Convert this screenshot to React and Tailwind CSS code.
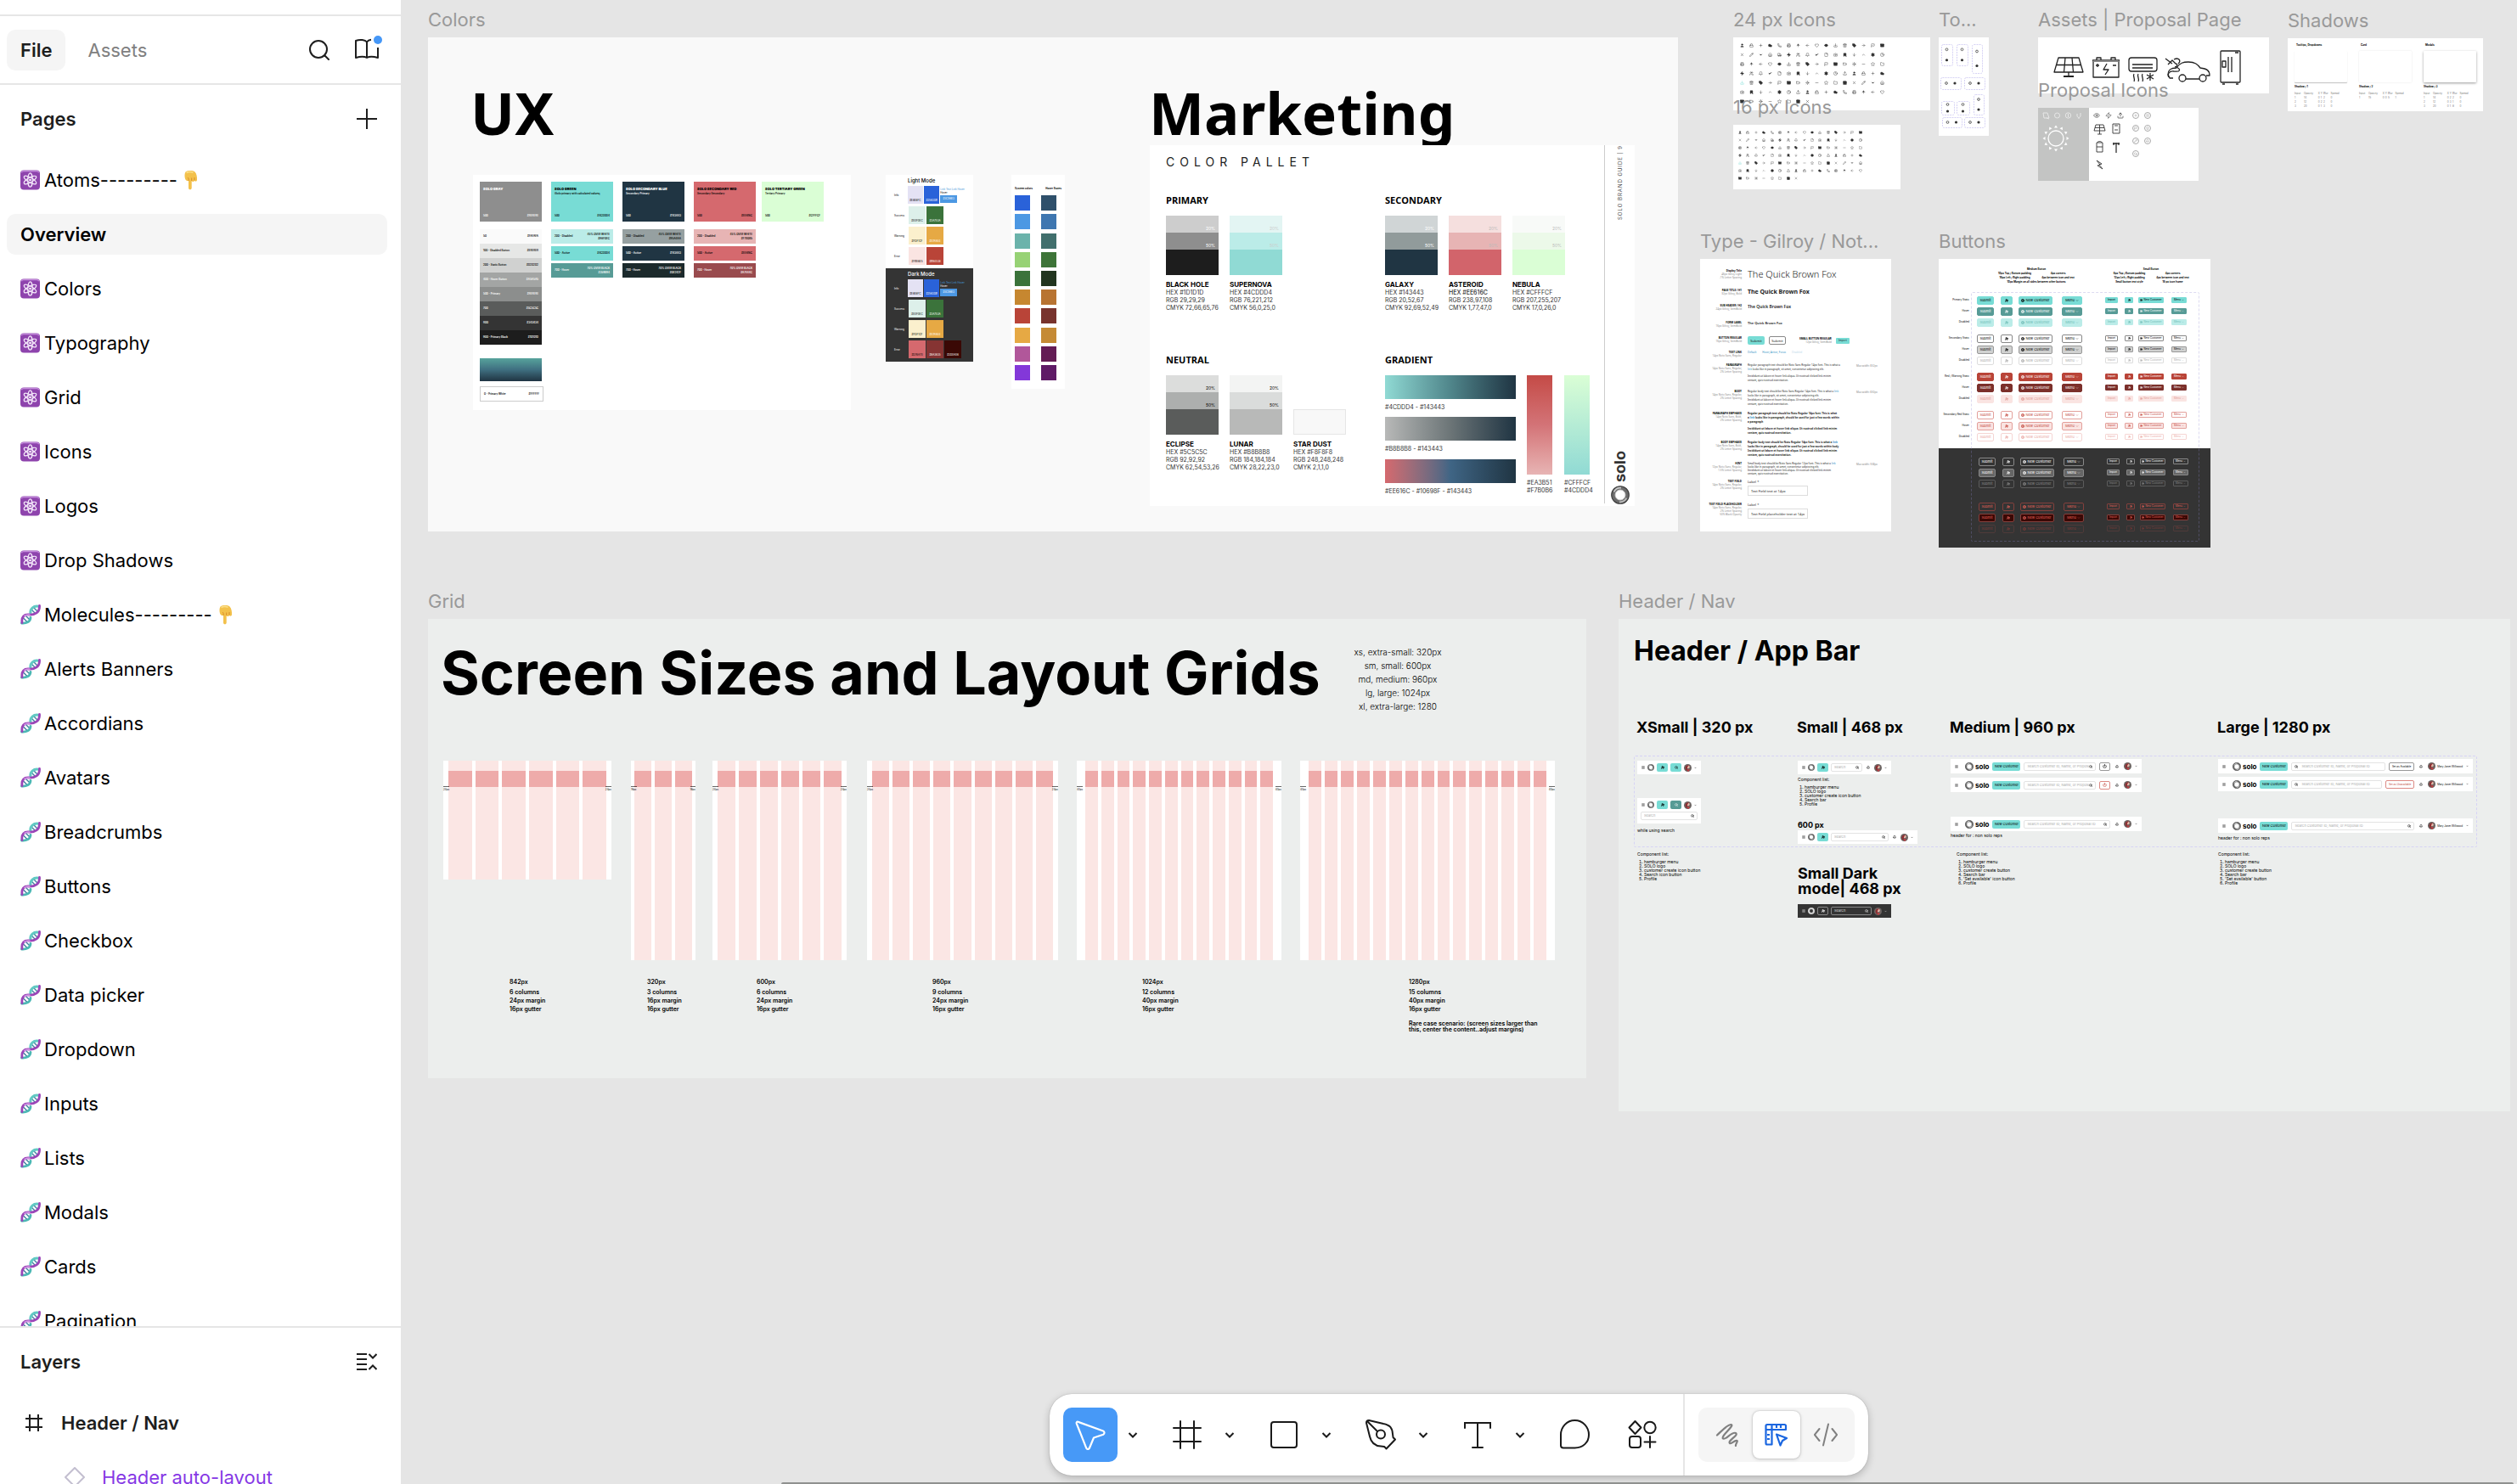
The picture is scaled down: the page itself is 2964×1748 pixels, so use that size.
import React from "react";
import {
  Search, Bell, User, Users, Settings, House, Heart, Star, Lock, Mail, Phone, Camera, Calendar, Check, X, Plus, Minus,
  ChevronDown, ChevronUp, ArrowUp, ArrowDown, ArrowLeft, ArrowRight, Trash2, Pencil, Flag, Cloud, Sun, Clock, Download,
  Upload, Eye, File, Folder, Tag, Truck, Zap, Battery, Printer, Bookmark, Menu, UserPlus, CirclePlus, Power,
} from "lucide-react";

/* ---------- shared drawings ---------- */

function AtomEmoji() {
  return (
    <svg viewBox="0 0 24 24" className="size-6 shrink-0" aria-hidden="true">
      <rect x="0" y="0.5" width="23" height="23" rx="4" fill="#8e44ad" />
      <path d="M1.500 3.200C1.500 2 2.500 1.600 3.700 1.600h15.600c1.200 0 2.200.4 2.200 1.600" stroke="#c48bdc" strokeWidth="1.400" fill="none" />
      <g fill="none" stroke="#f4e8fa" strokeWidth="1.200">
        <ellipse cx="11.500" cy="12" rx="2.800" ry="8.200" />
        <ellipse cx="11.500" cy="12" rx="2.800" ry="8.200" transform="rotate(60 11.500 12)" />
        <ellipse cx="11.500" cy="12" rx="2.800" ry="8.200" transform="rotate(120 11.500 12)" />
      </g>
      <circle cx="11.500" cy="12" r="1.300" fill="#fff" />
    </svg>
  );
}

function DnaEmoji() {
  return (
    <svg viewBox="0 0 24 24" className="size-6 shrink-0" fill="none" strokeLinecap="round" aria-hidden="true">
      <path d="M13.500 6.500l4 4M16 4l4 4M3.500 16l4.500 4.500M6.500 13.500l4.500 4.500" stroke="#3f7f9f" strokeWidth="1.400" />
      <path d="M1.500 22C7 22.500 11.500 20.500 12 15.500" stroke="#4bb8b4" strokeWidth="2.800" />
      <path d="M12 11C11 5 15.500 1.500 21 2.200" stroke="#62c9c3" strokeWidth="3" />
      <path d="M2 21.500C1 14.500 4.500 11.500 10 12c6 .5 13-2 12.500-10.500" stroke="#9b45b8" strokeWidth="2.800" />
      <path d="M5 13.500c2-1.500 4-1.500 6-1.300" stroke="#cf94e2" strokeWidth="1.600" />
    </svg>
  );
}

function HandEmoji() {
  return (
    <svg viewBox="0 0 24 24" className="size-6 shrink-0" aria-hidden="true">
      <path d="M5.500 2.500C8 .8 14 .5 16.500 2.500c2 2 2.800 6 2.500 9.500-.2 2-2.500 2.200-3 .5-.5 2-2.800 2-3.300.5v8.500c0 2.400-3.700 2.400-3.700 0V13c-2 .5-3.500-.8-4-2.500-.7-2.500-.8-6 .5-8z" fill="#f3c14b" />
      <path d="M12.700 13V9.500M16 12.500V9M9 13c.5-1.500.3-3-1-4" stroke="#d98e2b" strokeWidth="1" fill="none" />
      <path d="M6.500 3.500c2-1.300 6-1.300 8-.2" stroke="#fbe08a" strokeWidth="1.500" fill="none" />
    </svg>
  );
}

function SoloMark({ className, light }) {
  return (
    <svg viewBox="0 0 24 24" className={className} aria-hidden="true" fill="none">
      <circle cx="12" cy="12" r="9" stroke={light ? "#ddd" : "#6b6b6b"} strokeWidth="5" />
      <circle cx="12" cy="12" r="11.200" stroke={light ? "#eee" : "#3f3f3f"} strokeWidth="1.200" />
      <path d="M4 8a9 9 0 0 1 9-5" stroke="#c9c9c9" strokeWidth="2" />
      <path d="M20 16a9 9 0 0 1-9 5" stroke="#bdbdbd" strokeWidth="2" />
      <circle cx="12" cy="12" r="6.500" stroke="#d0d0d0" strokeWidth="1" />
    </svg>
  );
}

function Avatar() {
  return (
    <svg viewBox="0 0 20 20" className="size-[9px] shrink-0" aria-hidden="true">
      <circle cx="10" cy="10" r="10" fill="#6b6462" />
      <circle cx="11" cy="7.500" r="4" fill="#e6b8a8" />
      <path d="M4 8c0-5 8-7 11-4-3 0-5 1-6 5l-1 9C4 16 3 12 4 8z" fill="#8e2f33" />
      <path d="M9 14h6l-2 5H9z" fill="#c33b3f" />
    </svg>
  );
}

/* ---------- sidebar ---------- */

const pages = [
  ["atom", "Atoms---------", true],
  [null, "Overview"],
  ["atom", "Colors"],
  ["atom", "Typography"],
  ["atom", "Grid"],
  ["atom", "Icons"],
  ["atom", "Logos"],
  ["atom", "Drop Shadows"],
  ["dna", "Molecules---------", true],
  ["dna", "Alerts Banners"],
  ["dna", "Accordians"],
  ["dna", "Avatars"],
  ["dna", "Breadcrumbs"],
  ["dna", "Buttons"],
  ["dna", "Checkbox"],
  ["dna", "Data picker"],
  ["dna", "Dropdown"],
  ["dna", "Inputs"],
  ["dna", "Lists"],
  ["dna", "Modals"],
  ["dna", "Cards"],
  ["dna", "Pagination"],
];

function Sidebar() {
  return (
    <aside className="flex h-full w-[472px] shrink-0 flex-col bg-white text-[22px] leading-8 text-black">
      <div className="h-[17px] shrink-0" />
      <header className="flex h-[83px] shrink-0 items-center border-y-2 border-[#e6e6e6] pr-4 pl-2">
        <button className="h-12 rounded-[10px] bg-[#f5f5f5] px-4 font-semibold text-[#1e1e1e]">File</button>
        <button className="ml-2.5 h-12 px-4 text-[#808080]">Assets</button>
        <button aria-label="Search" className="ml-auto flex size-12 items-center justify-center">
          <svg viewBox="0 0 24 24" className="size-6" fill="none" stroke="#1e1e1e" strokeWidth="2" strokeLinecap="round">
            <circle cx="11" cy="11" r="10" />
            <path d="M18.500 18.500L23 23" />
          </svg>
        </button>
        <button aria-label="Libraries" className="ml-2 flex size-12 items-center justify-center">
          <svg viewBox="0 0 36 36" className="size-9" fill="none" stroke="#1e1e1e" strokeWidth="2" strokeLinejoin="round">
            <path d="M18 8.500v18.500M23 5.800C21 6 19 7 18 8.500 16 6 10 5 5 7v20c5-1.500 10.500-1.500 13 0 2.500-1.500 8-1.500 13 0V15" />
            <circle cx="31" cy="6" r="5" fill="#4597f7" stroke="none" />
          </svg>
        </button>
      </header>
      <div className="flex h-20 shrink-0 items-center justify-between pr-7 pl-6">
        <h2 className="font-semibold text-[#1e1e1e]">Pages</h2>
        <button aria-label="Add page">
          <svg viewBox="0 0 24 24" className="size-6" stroke="#1e1e1e" strokeWidth="2">
            <path d="M12 0v24M0 12h24" />
          </svg>
        </button>
      </div>
      <nav className="min-h-0 flex-1 overflow-hidden px-2">
        <ul>
          {pages.map(([kind, name, hand]) => (
            <li key={name} className="flex h-16 items-center">
              <a
                href={"#" + name}
                className={
                  kind
                    ? "flex h-12 w-full items-center gap-1 px-4"
                    : "flex h-12 w-[448px] items-center rounded-[10px] bg-[#f5f5f5] px-4 font-semibold"
                }
              >
                {kind === "atom" && <AtomEmoji />}
                {kind === "dna" && <DnaEmoji />}
                <span>{name}</span>
                {hand && <HandEmoji />}
              </a>
            </li>
          ))}
        </ul>
      </nav>
      <section className="h-[186px] shrink-0 overflow-hidden border-t-2 border-[#e6e6e6]">
        <div className="flex h-20 items-center justify-between pr-7 pl-6">
          <h2 className="font-semibold text-[#1e1e1e]">Layers</h2>
          <button aria-label="Collapse layers">
            <svg viewBox="0 0 24 24" className="size-6" fill="none" stroke="#1e1e1e" strokeWidth="2">
              <path d="M0 3h12M0 9h12M0 15h12M0 21h12M14.500 3l4.500 4.500L23.500 3M14.500 21l4.500-4.500 4.500 4.500" />
            </svg>
          </button>
        </div>
        <div className="flex h-16 items-center gap-5 pl-7 font-semibold text-[#1e1e1e]">
          <svg viewBox="0 0 24 24" className="size-6" fill="none" stroke="#1e1e1e" strokeWidth="2">
            <path d="M7 2v20M17 2v20M2 7h20M2 17h20" />
          </svg>
          Header / Nav
        </div>
        <div className="flex h-16 items-center gap-5 pl-[76px] text-[#8638e5]">
          <svg viewBox="0 0 24 24" className="size-6" fill="none" stroke="#c3bfd0" strokeWidth="2" strokeLinejoin="round">
            <path d="M12 1l11 11-11 11L1 12z" />
          </svg>
          Header auto-layout
        </div>
      </section>
    </aside>
  );
}

/* ---------- canvas frame ---------- */

function Frame({ title, place, body, children }) {
  return (
    <section className={"absolute " + place}>
      <h2 className="h-[42px] overflow-visible text-[22px] leading-[42px] whitespace-nowrap text-[#999]">{title}</h2>
      <div className={"relative overflow-hidden " + body}>{children}</div>
    </section>
  );
}

/* ---------- colors ---------- */

const heroes = [
  ["SOLO GRAY", "", "500", "#8E8E8E", "bg-[#8e8e8e] text-white"],
  ["SOLO GREEN", "(Solo primary with calculated values)", "500", "#4CDDD4", "bg-[#78dcd5]"],
  ["SOLO SECONDARY BLUE", "Secondary Primary", "500", "#143443", "bg-[#203543] text-white"],
  ["SOLO SECONDARY RED", "Secondary Secondary", "500", "#EE616C", "bg-[#d5696e]"],
  ["SOLO TERTIARY GREEN", "Tertiary Primary", "500", "#CFFFCF", "bg-[#dafed5]"],
];
const tints = [
  null,
  [["200 - Disabled", "#A6F0EC", "bg-[#bbece8]", "45% OVER WHITE"], ["500 - Active", "#4CDDD4", "bg-[#78dcd5]"], ["700 - Hover", "#359B94", "bg-[#579b96] text-white", "70% OVER BLACK"]],
  [["200 - Disabled", "#95A4AA", "bg-[#96a0a1]", "45% OVER WHITE"], ["500 - Active", "#143443", "bg-[#203543] text-white"], ["700 - Hover", "#0E242F", "bg-[#1c2a2c] text-white", "70% OVER BLACK"]],
  [["200 - Disabled", "#F7B0B5", "bg-[#e7b4b4]", "45% OVER WHITE"], ["500 - Active", "#EE616C", "bg-[#d5696e]"], ["700 - Hover", "#A7444C", "bg-[#994b4e] text-white", "70% OVER BLACK"]],
];
const grays = [
  ["50", "#FAFAFA", "bg-[#fafafa]"],
  ["100 - Disabled Button", "#E8E8E8", "bg-[#e6e7e6]"],
  ["200 - Static Button", "#D2D2D2", "bg-[#d0d1d0]"],
  ["400 - Hover Button", "#A5A5A5", "bg-[#a3a5a4] text-white"],
  ["500 - Primary", "#8E8E8E", "bg-[#8c8e8d] text-white"],
  ["700", "#5C5C5C", "bg-[#5a5c5b] text-white"],
  ["800", "#343434", "bg-[#343434] text-white"],
  ["900 - Primary Black", "#1D1D1D", "bg-[#1d1d1d] text-white"],
];

function UxPalette() {
  return (
    <div className="absolute top-[162px] left-[53px] h-[277px] w-[445px] bg-white p-2 text-[3px] leading-[5px] font-semibold">
      <div className="flex items-start gap-[11px]">
        {heroes.map(([name, sub, step, hex, color], i) => (
          <div key={name} className={i === 4 ? "-ml-1 w-[73px]" : "w-[73px]"}>
            <div className={"flex h-[47px] flex-col p-1 pt-1.5 " + color}>
              <b className="text-[4px] leading-[6px] whitespace-nowrap">{name}</b>
              <span>{sub}</span>
              <span className="mt-auto flex justify-between">
                <span>{step}</span>
                <span>{hex}</span>
              </span>
            </div>
            {i === 0 && (
              <div className="mt-[9px]">
                {grays.map(([label, code, tone]) => (
                  <div key={label} className={"flex h-[17px] items-center justify-between px-1 " + tone}>
                    <span>{label}</span>
                    <span>{code}</span>
                  </div>
                ))}
                <div className="mt-4 h-[27px] bg-linear-to-b from-[#57a39c] via-[#3f6f80] to-[#203543]" />
                <div className="mt-1.5 flex h-[18px] w-[75px] items-center justify-between border border-[#ccc] px-1">
                  <span>0 - Primary White</span>
                  <span>#FFFFFF</span>
                </div>
              </div>
            )}
            {tints[i] && (
              <div className="mt-[9px] flex flex-col gap-[3px]">
                {tints[i].map(([label, code, tone, over]) => (
                  <div key={label} className={"flex h-[17px] items-center justify-between px-1 " + tone}>
                    <span>{label}</span>
                    <span className="text-right">
                      {over && <span className="block">{over}</span>}
                      {code}
                    </span>
                  </div>
                ))}
              </div>
            )}
          </div>
        ))}
      </div>
    </div>
  );
}

const modeRows = [
  ["Info", [["#E8E8FC", "bg-[#e4e2f4] text-black"], ["#2563DB", "bg-[#2a62d9] text-white"]]],
  ["Success", [["#E0F0EC", "bg-[#ddf0ea] text-black"], ["#3A753A", "bg-[#3b733b] text-white"]]],
  ["Warning", [["#FDF1CF", "bg-[#fbf0cd] text-black"], ["#E7A944", "bg-[#e6a944] text-white"]]],
];
const lightRows = [...modeRows, ["Error", [["#FBE6E5", "bg-[#fae4e2] text-black"], ["#B94538", "bg-[#b94438] text-white"]]]];
const darkRows = [
  ...modeRows,
  ["Error", [["#D76A70", "bg-[#d5696e] text-black"], ["#8A3635", "bg-[#863433] text-white"], ["#3D0A06", "bg-[#3a0805] text-white"]]],
];

function ModePanel({ title, rows, tone }) {
  return (
    <div className={"h-[110px] px-2.5 pt-[3px] text-[3px] leading-[4px] " + tone}>
      <h4 className="pl-4 text-[6px] leading-[8px] font-medium">{title}</h4>
      <div className="mt-0.5 flex flex-col gap-[3px]">
        {rows.map(([label, cells], i) => (
          <div key={label} className="flex h-[21px] items-center gap-px">
            <span className="w-4">{label}</span>
            {cells.map(([code, color]) => (
              <span key={code} className={"flex h-[21px] w-5 items-end justify-center pb-0.5 " + color}>{code}</span>
            ))}
            {i === 0 && (
              <span className="flex flex-col whitespace-nowrap">
                <span className="text-[#4597d7]">Link Text Link Hover</span>
                <span className="leading-[5px]">Hover</span>
                <span className="flex h-[9px] w-5 items-center justify-center bg-[#4c98e3] text-white">#4C98E3</span>
              </span>
            )}
          </div>
        ))}
      </div>
    </div>
  );
}

const systemColors = [
  ["bg-[#2a62d9]", "bg-[#2f506b]"],
  ["bg-[#4c98e3]", "bg-[#3e76b0]"],
  ["bg-[#6bb3ab]", "bg-[#416f6d]"],
  ["bg-[#97d275]", "bg-[#3d7438]"],
  ["bg-[#3b733b]", "bg-[#22351f]"],
  ["bg-[#c68730]", "bg-[#b87432]"],
  ["bg-[#b94438]", "bg-[#78332d]"],
  ["bg-[#e6a944]", "bg-[#c58a35]"],
  ["bg-[#b1579a]", "bg-[#641c55]"],
  ["bg-[#8338d9]", "bg-[#5f1a66]"],
];

const primary = [
  ["BLACK HOLE", ["HEX #1D1D1D", "RGB 29,29,29", "CMYK 72,66,65,76"], ["bg-[#cdcdcd]", "bg-[#8e8e8e]", "bg-[#1d1d1d]"], "text-white"],
  ["SUPERNOVA", ["HEX #4CDDD4", "RGB 76,221,212", "CMYK 56,0,25,0"], ["bg-[#e3f5f3]", "bg-[#bbece8]", "bg-[#90dad4]"], "text-[#ccc]"],
];
const secondary = [
  ["GALAXY", ["HEX #143443", "RGB 20,52,67", "CMYK 92,69,52,49"], ["bg-[#d0d5d6]", "bg-[#919b9b]", "bg-[#203543]"], "text-white"],
  ["ASTEROID", ["HEX #EE616C", "RGB 238,97,108", "CMYK 1,77,47,0"], ["bg-[#f5dfde]", "bg-[#e7b4b4]", "bg-[#d2646b]"], "text-[#bbb]"],
  ["NEBULA", ["HEX #CFFFCF", "RGB 207,255,207", "CMYK 17,0,26,0"], ["bg-[#f8faf8]", "bg-[#ecf9e9]", "bg-[#dafed5]"], "text-[#bbb]"],
];
const neutral = [
  ["ECLIPSE", ["HEX #5C5C5C", "RGB 92,92,92", "CMYK 62,54,53,26"], ["bg-[#dcdddc]", "bg-[#adafae]", "bg-[#5a5c5b]"], "text-black"],
  ["LUNAR", ["HEX #B8B8B8", "RGB 184,184,184", "CMYK 28,22,23,0"], ["bg-[#f3f4f3]", "bg-[#dadcdb]", "bg-[#b8b9b8]"], "text-black"],
  ["STAR DUST", ["HEX #F8F8F8", "RGB 248,248,248", "CMYK 2,1,1,0"], ["", "", "bg-[#f8f8f8] border border-[#e6e6e6]"], null],
];

function BrandSwatches({ title, items }) {
  return (
    <div>
      <h4 className="font-['Open_Sans'] text-[11px] leading-3 font-bold">{title}</h4>
      <div className="mt-3 flex gap-[13px]">
        {items.map(([name, lines, tones, ink]) => (
          <div key={name} className="w-[62px] text-[7px] leading-[9px] whitespace-nowrap text-[#333]">
            <div className={"flex h-5 items-end justify-end px-1 text-[5px] " + tones[0] + " " + (ink || "")}>{ink && "20%"}</div>
            <div className={"flex h-5 items-end justify-end px-1 text-[5px] " + tones[1] + " " + (ink || "")}>{ink && "50%"}</div>
            <div className={"h-[30px] " + tones[2]} />
            <b className="mt-[7px] block text-[8px] text-black">{name}</b>
            {lines.map((l) => (
              <div key={l} className={l === "HEX #EE616C" ? "font-medium" : ""}>{l}</div>
            ))}
          </div>
        ))}
      </div>
    </div>
  );
}

function MarketingPalette() {
  return (
    <div className="absolute top-[127px] left-[850px] flex h-[425px] w-[571px] bg-white">
      <div className="h-[422px] w-[536px] border-r border-[#ccc] pl-[19px]">
        <h3 className="pt-2 text-[14px] leading-6 tracking-[6px] text-[#222]">COLOR PALLET</h3>
        <div className="mt-[27px] grid auto-rows-[188px] grid-cols-[258px_1fr]">
          <BrandSwatches title="PRIMARY" items={primary} />
          <BrandSwatches title="SECONDARY" items={secondary} />
          <BrandSwatches title="NEUTRAL" items={neutral} />
          <div>
            <h4 className="font-['Open_Sans'] text-[11px] leading-3 font-bold">GRADIENT</h4>
            <div className="mt-3 flex items-start text-[7px] leading-[9px] text-[#333]">
              <div className="w-[154px]">
                <div className="h-7 bg-linear-to-r from-[#90dad4] via-[#50868b] to-[#203543]" />
                <p className="mt-[5px] mb-[7px]">#4CDDD4 - #143443</p>
                <div className="h-7 bg-linear-to-r from-[#b8b9b8] via-[#6c7577] to-[#203543]" />
                <p className="mt-[5px] mb-[8px]">#B8B8B8 - #143443</p>
                <div className="h-7 bg-linear-to-r from-[#d5696e] via-[#3f6585] to-[#203543]" />
                <p className="mt-[5px]">#EE616C - #10698F - #143443</p>
              </div>
              <div className="ml-[13px] w-[30px]">
                <div className="mb-[5px] h-[117px] bg-linear-to-b from-[#c44a46] via-[#d37377] to-[#e7b4b4]" />
                <p>#EA3B51</p>
                <p>#F7B0B6</p>
              </div>
              <div className="ml-[14px] w-[30px]">
                <div className="mb-[5px] h-[117px] bg-linear-to-b from-[#dafed5] to-[#90dad4]" />
                <p>#CFFFCF</p>
                <p>#4CDDD4</p>
              </div>
            </div>
          </div>
        </div>
      </div>
      <div className="flex flex-1 flex-col items-center justify-between pb-0.5">
        <p className="rotate-180 text-[6px] leading-3 tracking-[1px] text-[#444] [writing-mode:vertical-rl]">SOLO BRAND GUIDE | 9</p>
        <div className="flex flex-col items-center gap-1">
          <b className="rotate-180 text-[18px] leading-5 text-[#333] [writing-mode:vertical-rl]">solo</b>
          <SoloMark className="size-[22px]" />
        </div>
      </div>
    </div>
  );
}

function ColorsFrame() {
  return (
    <Frame title="Colors" place="left-8 top-[2px]" body="h-[582px] w-[1472px] bg-[#f9f9f9]">
      <h3 className="absolute top-[42px] left-[50px] font-['Noto_Sans'] text-[69px] leading-[92px] font-bold">UX</h3>
      <h3 className="absolute top-[42px] left-[849px] font-['Noto_Sans'] text-[69px] leading-[92px] font-bold">Marketing</h3>
      <UxPalette />
      <div className="absolute top-[162px] left-[539px] w-[103px]">
        <ModePanel title="Light Mode" rows={lightRows} tone="bg-white" />
        <ModePanel title="Dark Mode" rows={darkRows} tone="bg-[#343434] text-white" />
      </div>
      <div className="absolute top-[162px] left-[687px] flex h-[252px] w-[63px] flex-col justify-between bg-white px-1 pt-3 pb-2.5 text-[3px] leading-[8px]">
        <div className="flex justify-between font-bold">
          <span>System colors</span>
          <span>Hover States</span>
        </div>
        {systemColors.map(([a, b]) => (
          <div key={a} className="flex gap-[13px]">
            <span className={"h-[18px] w-[18px] " + a} />
            <span className={"h-[18px] w-[18px] " + b} />
          </div>
        ))}
      </div>
      <MarketingPalette />
    </Frame>
  );
}

/* ---------- icon sheets ---------- */

const glyphs = [
  User, Users, Sun, ArrowUp, ArrowDown, Pencil, Tag, Lock, Bell, Minus, ArrowLeft, ChevronUp, ChevronDown, ArrowRight, Plus, Check,
  Star, Heart, Settings, House, Flag, Cloud, File, Folder, Eye, Clock, Truck, Mail, Phone, Camera, Calendar, Download, Upload, Zap,
  Battery, Printer, Bookmark, X, Trash2,
];

function IconSheet({ grid, size }) {
  const list = Array.from({ length: 104 }, (_, i) => glyphs[(i * 7 + (i >> 4) * 3) % glyphs.length]);
  return (
    <div className={"text-[#333] " + grid}>
      {list.map((G, i) => (
        <G key={i} className={size + (i === 64 ? " text-[#78dcd5]" : "")} strokeWidth={2} fill={i % 3 === 0 ? "currentColor" : "none"} />
      ))}
    </div>
  );
}

const togglesBoxes = [
  [3, 8, 13, 25], [21, 8, 13, 25], [39, 8, 12, 34], [2, 47, 24, 14], [30, 47, 24, 14],
  [3, 75, 15, 16], [21, 75, 15, 16], [41, 67, 12, 24], [4, 94, 23, 12], [30, 94, 24, 12],
];

function TogglesDrawing() {
  return (
    <svg viewBox="0 0 59 116" className="h-[116px] w-[59px]" fill="none" aria-hidden="true">
      {togglesBoxes.map(([x, y, w, h]) => {
        const tall = h > w - 1;
        const cx = x + w / 2;
        const cy = y + h / 2;
        return (
          <g key={x + "-" + y}>
            <rect x={x + 0.5} y={y + 0.5} width={w} height={h} rx="2" stroke="#d6d2f4" strokeDasharray="2 1" />
            <circle cx={tall ? cx : cx - 5} cy={tall ? cy - h / 4 : cy} r="1.400" stroke="#444" strokeWidth="0.800" />
            <circle cx={tall ? cx : cx + 5} cy={tall ? cy + h / 4 : cy} r="1.600" fill="#333" />
          </g>
        );
      })}
    </svg>
  );
}

function AssetsDrawing() {
  return (
    <svg viewBox="0 0 272 66" className="h-[66px] w-[272px]" fill="none" stroke="#222" strokeWidth="1.300" strokeLinejoin="round" aria-hidden="true">
      <path d="M24 24h24l5 17H19zM32 24l-1.500 17M40 24l1.500 17M22 32.500h28M36 41v5" />
      <path d="M30 46h12" strokeWidth="2" />
      <path d="M65 27h30v20H65zM64 27h32M69 27v-3h5v3M86 27v-3h5v3M68 33h4M70 31v4M88 33h4M81 31l-4 7h6l-4 6" />
      <path d="M65 28h30" strokeWidth="2" stroke="#888" />
      <rect x="107" y="24" width="33" height="16" rx="3" />
      <path d="M111 32h24M111 36h24M113 43c-2 3 2 6 0 9M118 43c-2 3 2 6 0 9M123 43c-2 3 2 6 0 9M132 42v9M128 44l8 5M136 44l-8 5" />
      <path d="M153 44c0-6 3-8 10-8 4-6 8-7 14-7 8 0 11 3 14 7 8 1 11 3 11 9h-4M190 49h-16M159 48h-4l-2-4" />
      <circle cx="170" cy="48" r="4" />
      <circle cx="194" cy="48" r="4" />
      <path d="M150 25l8 6M153 32l5-5 4 4c3 0 2 4-1 4M160 26c6-3 9 2 5 5M163 35c6 3 4 6-3 5-6-1-8 4-6 7" />
      <rect x="215" y="16" width="23" height="37" rx="1" />
      <path d="M224 23v18M228 23v18M217 28h4v7h-4zM232 18h4M217 55h3M233 55h3" />
    </svg>
  );
}

function ProposalDrawing() {
  return (
    <svg viewBox="0 0 60 87" className="h-[87px] w-[60px] bg-[#c3c4c3]" fill="none" stroke="#fff" aria-hidden="true">
      <circle cx="21" cy="36" r="9" strokeWidth="1.300" />
      {Array.from({ length: 12 }, (_, i) => (
        <path key={i} d="M19 23.500h4l-2-3z" fill="#fff" stroke="none" transform={"rotate(" + i * 30 + " 21 36)"} />
      ))}
      <g opacity="0.600">
        <path d="M6 6h5l2 6H7zM10 12l3 1" />
        <circle cx="22.500" cy="9" r="3" />
        <circle cx="35.500" cy="9" r="3.200" />
        <path d="M35.500 7v4M46 7v3c1 2 4 2 4-1V6M48 11v2" />
      </g>
    </svg>
  );
}

function ProposalIcons() {
  const ring = "absolute flex size-2 items-center justify-center rounded-full border border-[#aaa] text-[#777]";
  return (
    <>
      <ProposalDrawing />
      <Eye className="absolute top-[5px] left-[65px] size-2 text-[#555]" strokeWidth={2} />
      <Zap className="absolute top-[5px] left-[79px] size-2 text-[#555]" strokeWidth={2} />
      <Upload className="absolute top-[5px] left-[93px] size-2 text-[#333]" strokeWidth={2} />
      <svg viewBox="0 0 40 60" className="absolute top-[18px] left-[64px] h-[60px] w-10" fill="none" stroke="#333" strokeWidth="0.900" aria-hidden="true">
        <path d="M4 2h9l2 7H2zM8.500 2v11M3 5.500h11M6 13h5" />
        <path d="M24 1h8v11h-8zM26 3h4M26 8h4" />
        <path d="M5 23h7v11H5zM5 28h7M6 23c0-2 5-2 5 0" />
        <path d="M28 23v12M24 24h8M25 23v3M31 23v3" strokeWidth="1.300" />
        <path d="M5 44l6 4-3 1 4 5-6-4 3-1z" />
      </svg>
      <span className={ring + " top-[5px] left-[111px]"}><Plus className="size-1" /></span>
      <span className={ring + " top-[5px] left-[125px]"}><Menu className="size-1" /></span>
      <span className={ring + " top-[20px] left-[111px]"}><Flag className="size-1" /></span>
      <span className={ring + " top-[20px] left-[125px]"}><Star className="size-1" /></span>
      <span className={ring + " top-[35px] left-[111px]"}><Pencil className="size-1" /></span>
      <span className={ring + " top-[35px] left-[125px]"}><Bell className="size-1" /></span>
      <span className={ring + " top-[50px] left-[111px]"}><Cloud className="size-1" /></span>
    </>
  );
}

const shadowCards = [
  ["Tooltips, Dropdowns", "Shadow / 1", "shadow-[0_1px_1px_rgba(0,0,0,0.25)]", [[1, 14, 0, 1, 2, 0], [2, 12, 0, 2, 2, 0], [3, 20, 0, 1, 3, 0]]],
  ["Card", "Shadow / 2", "shadow-[0_0_2px_rgba(0,0,0,0.12)]", [[1, 15, 0, 0, 5, 1]]],
  ["Modals", "Shadow / 3", "shadow-[0_1px_3px_rgba(0,0,0,0.4)]", [[1, 14, 0, 2, 2, 0], [2, 12, 0, 3, 1, 0], [3, 20, 0, 1, 8, 0]]],
];

function ShadowsContent() {
  return (
    <div className="flex gap-[14px] px-2 pt-1.5 text-[3px] leading-[5px]">
      {shadowCards.map(([name, label, shadow, rows]) => (
        <div key={name} className="w-[62px]">
          <b className="block pl-0.5">{name}</b>
          <div className={"mt-1 h-[37px] rounded-[1px] bg-white " + shadow} />
          <b className="mt-[3px] block">{label}</b>
          <table className="mt-[3px] w-[58px] text-left text-[#777]">
            <thead>
              <tr>
                {["Input", "Opacity", "X", "Y", "Blur", "Spread"].map((h) => (
                  <th key={h} className="font-normal">{h}</th>
                ))}
              </tr>
            </thead>
            <tbody>
              {rows.map((r, i) => (
                <tr key={i}>
                  {r.map((v, j) => (
                    <td key={j}>{v}</td>
                  ))}
                </tr>
              ))}
            </tbody>
          </table>
        </div>
      ))}
    </div>
  );
}

/* ---------- type ---------- */

const L = ({ children }) => <a href="#link" className="text-[#2f8fc4]">{children}</a>;

function TypeRow({ top, title, notes, children, side }) {
  return (
    <div className={"absolute left-0 flex text-[3px] leading-[4px] " + top}>
      <div className="w-[49px] text-right whitespace-nowrap text-[#888]">
        <b className="block text-black">{title}</b>
        {notes.map((n) => (
          <span key={n} className="block">{n}</span>
        ))}
      </div>
      <div className="ml-[7px] w-[128px] leading-[5px] whitespace-nowrap text-[#222]">{children}</div>
      <div className="pt-px text-[#888]">{side}</div>
    </div>
  );
}

function TypeContent() {
  return (
    <div className="font-['Noto_Sans']">
      <TypeRow top="top-3" title="Display Title" notes={["46px Gilroy Light", "-1% Letter Spacing"]}>
        <p className="text-[11px] leading-3 font-light">The Quick Brown Fox</p>
      </TypeRow>
      <TypeRow top="top-[35px]" title="PAGE TITLE / H1" notes={["32px Gilroy, Bold"]}>
        <p className="text-[7px] leading-[8px] font-bold">The Quick Brown Fox</p>
      </TypeRow>
      <TypeRow top="top-[53px]" title="SUB HEADER / H2" notes={["24px Gilroy, SemiBold"]}>
        <p className="text-[5px] leading-[7px] font-semibold">The Quick Brown Fox</p>
      </TypeRow>
      <TypeRow top="top-[73px]" title="FORM LABEL" notes={["16px Gilroy, SemiBold"]}>
        <p className="text-[4px] leading-[5px] font-semibold">The Quick Brown Fox</p>
      </TypeRow>
      <TypeRow top="top-[91px]" title="BUTTON REGULAR" notes={["16px Gilroy, SemiBold"]}>
        <div className="flex items-center text-[4px]">
          <button className="h-2.5 w-5 rounded-xs bg-[#78dcd5]">Submit</button>
          <button className="ml-[5px] h-2.5 w-5 rounded-xs border border-[#888]">Submit</button>
          <span className="ml-4 text-right text-[3px] leading-[4px] text-[#888]">
            <b className="block text-black">SMALL BUTTON REGULAR</b>12px Gilroy, SemiBold
          </span>
          <button className="ml-[5px] h-[7px] w-4 rounded-[1px] bg-[#78dcd5] text-[3px]">Import</button>
        </div>
      </TypeRow>
      <TypeRow top="top-[108px]" title="TEXT LINK" notes={["14px Noto Sans, Regular"]}>
        <p className="flex gap-[7px]"><L>Default</L><L>Hover, Active, Focus</L><span className="text-[#bcd9ea]">Disabled</span></p>
      </TypeRow>
      <TypeRow top="top-[123px]" title="PARAGRAPH" notes={["14px Noto Sans, Regular,", "2% Letter Spacing"]} side="Max width: 652px">
        <p>Regular paragraph text should be Noto Sans Regular 14px font. This is what a<br /><L>link</L> looks like in paragraph, sit amet, consectetur adipiscing elit.</p>
        <p className="mt-[3px]">Incididunt ut labore et hover link aliqua. Ut nostrud clicked link minim<br />veniam, quis nostrud exercitation.</p>
      </TypeRow>
      <TypeRow top="top-[154px]" title="BODY" notes={["14px Noto Sans, Regular,", "2% Letter Spacing"]} side="Max width: 650px">
        <p>Regular body text should be Noto Sans Regular 14px font. This is what a <L>link</L><br />looks like in paragraph, sit amet, consectetur adipiscing elit.<br />Incididunt ut labore et hover link aliqua. Ut nostrud clicked link minim<br />veniam, quis nostrud exercitation.</p>
      </TypeRow>
      <TypeRow top="top-[180px]" title="PARAGRAPH EMPHASIS" notes={["14px Noto Sans, Bold,", "2% Letter Spacing"]}>
        <p className="font-bold">Regular paragraph text should be Noto Regular 14px font. This is what<br />a <L>link</L> looks like in paragraph, should be used for just a few words within<br />a paragraph</p>
        <p className="mt-[3px] font-bold">Incididunt ut labore et hover link aliqua. Ut nostrud clicked link minim<br />veniam, quis nostrud exercitation.</p>
      </TypeRow>
      <TypeRow top="top-[214px]" title="BODY EMPHASIS" notes={["14px Noto Sans, Bold,", "2% Letter Spacing"]}>
        <p className="font-bold">Regular body text should be Noto Regular 14px font. This is what a <L>link</L><br />looks like in paragraph, should be used for just a few words within body<br />Incididunt ut labore et hover link aliqua. Ut nostrud clicked link minim<br />veniam, quis nostrud exercitation.</p>
      </TypeRow>
      <TypeRow top="top-[239px]" title="HINT" notes={["12px Noto Sans, Regular,", "1.5% Letter Spacing"]} side="Max width: 558px">
        <p className="leading-[4px]">Small body text should be Noto Sans Regular 12px font. This is what a <L>link</L><br />looks like in paragraph, sit amet, consectetur adipiscing elit.<br />Incididunt ut labore et hover link aliqua. Ut nostrud clicked link minim<br />veniam, quis nostrud exercitation.</p>
      </TypeRow>
      <TypeRow top="top-[260px]" title="TEXT FIELD" notes={["14px Noto Sans, Regular,", "2% Letter Spacing"]}>
        <label className="block text-[4px]">Label *
          <input readOnly value="Text Field text at 14px" className="mt-[2px] block h-3 w-[71px] border border-[#ddd] px-[3px] text-[4px]" />
        </label>
      </TypeRow>
      <TypeRow top="top-[287px]" title="TEXT FIELD PLACEHOLDER" notes={["14px Noto Sans, Regular,", "2% Letter Spacing", "50% Black Opacity"]}>
        <label className="block text-[4px]">Label *
          <input readOnly value="Text Field placeholder text at 14px" className="mt-[2px] block h-3 w-[71px] border border-[#ddd] px-[3px] text-[4px]" />
        </label>
      </TypeRow>
    </div>
  );
}

/* ---------- buttons ---------- */

const lightGroups = [
  [["Primary Static", "bg-[#78dcd5] border-[#78dcd5] text-black"], ["Hover", "bg-[#579b96] border-[#579b96] text-white"], ["Disabled", "bg-[#bbece8] border-[#bbece8] text-[#6fbdb7]"]],
  [["Secondary Static", "border-[#888] text-black"], ["Hover", "bg-[#d0d1d0] border-[#999] text-black"], ["Disabled", "border-[#ddd] text-[#aaa]"]],
  [["Red / Warning Static", "bg-[#b94438] border-[#b94438] text-white"], ["Hover", "bg-[#7c302b] border-[#7c302b] text-white"], ["Disabled", "bg-[#fae4e2] border-[#fae4e2] text-[#e39b95]"]],
  [["Secondary Red Static", "border-[#e3a09b] text-[#c2453b]"], ["Hover", "bg-[#fae4e2] border-[#e3a09b] text-[#c2453b]"], ["Disabled", "border-[#f5d5d3] text-[#eaa6a1]"]],
];
const darkGroups = [
  [["", "border-[#888] text-white"], ["", "bg-[#666] border-[#888] text-white"], ["", "border-[#5c5c5c] text-[#888]"]],
  [["", "border-[#83403c] text-[#e06259]"], ["", "bg-[#3a0805] border-[#83403c] text-[#e06259]"], ["", "border-[#4f3a39] text-[#7a3d3a]"]],
];

function ButtonRow({ label, tone }) {
  const md = "flex h-2.5 items-center justify-center gap-px rounded-xs border ";
  const sm = "flex h-[7px] items-center justify-center gap-px rounded-[1px] border text-[3px] ";
  return (
    <div className="flex h-[13px] items-center text-[4px] leading-[5px] whitespace-nowrap">
      <span className="flex w-9 justify-end text-[3px] text-black">{label}</span>
      <button className={md + "ml-[9px] w-5 " + tone}>Submit</button>
      <button aria-label="Add customer" className={md + "ml-2 w-3.5 " + tone}><UserPlus className="size-1" strokeWidth={4} /></button>
      <button className={md + "ml-[7px] w-10 " + tone}><CirclePlus className="size-1" strokeWidth={4} />New Customer</button>
      <button className={md + "ml-[11px] w-6 " + tone}>Menu<ChevronDown className="size-1" /></button>
      <button className={sm + "ml-[27px] w-[15px] " + tone}>Import</button>
      <button aria-label="Add customer" className={sm + "ml-2 w-2.5 " + tone}><UserPlus className="size-[3px]" strokeWidth={4} /></button>
      <button className={sm + "ml-[6px] w-[30px] " + tone}><CirclePlus className="size-[3px]" strokeWidth={4} />New Customer</button>
      <button className={sm + "ml-[9px] w-[18px] " + tone}>Menu<ChevronDown className="size-[3px]" /></button>
    </div>
  );
}

function ButtonsContent() {
  return (
    <div className="relative">
      <div className="flex h-[223px] flex-col pb-1">
        <div className="flex gap-[41px] pt-2.5 pl-[68px] text-center text-[3px] leading-[5px] font-bold whitespace-nowrap">
          <div className="w-[94px]">Medium Button
            <div className="grid grid-cols-2 gap-x-2"><span>10px Top / Bottom padding</span><span>4px corners</span><span>16px Left / Right padding</span><span>4px between icon and text</span></div>
            10px Margin on all sides between other buttons
          </div>
          <div className="w-[94px]">Small Button
            <div className="grid grid-cols-2 gap-x-2"><span>6px Top / Bottom padding</span><span>4px corners</span><span>12px Left / Right padding</span><span>4px between icon and text</span><span>Small button text style</span><span>16 px icon frame</span></div>
          </div>
        </div>
        <div className="absolute top-[42px] flex flex-col gap-1.5">
          {lightGroups.map((g, i) => (
            <div key={i}>{g.map(([label, tone]) => <ButtonRow key={label} label={label} tone={tone} />)}</div>
          ))}
        </div>
      </div>
      <div className="flex h-[117px] flex-col gap-3.5 bg-[#343434] pt-[9px] pl-0.5">
        {darkGroups.map((g, i) => (
          <div key={i}>{g.map(([, tone], j) => <ButtonRow key={j} label="" tone={tone} />)}</div>
        ))}
      </div>
      <div className="pointer-events-none absolute top-[39px] left-[38px] h-[294px] w-[269px] rounded-xs border border-dashed border-[#8e88d0]/30" />
    </div>
  );
}

/* ---------- grid ---------- */

function GridSample({ place, count, edge, inset }) {
  return (
    <div className={"absolute top-[167px] bg-white " + place}>
      <div className={"flex h-full gap-1 " + inset}>
        {Array.from({ length: count }, (_, i) => (
          <div key={i} className="flex-1 bg-[#fbe6e4] pt-3">
            <div className="h-[19px] bg-[#eeabaa]" />
          </div>
        ))}
      </div>
      <div className="absolute inset-x-0 top-[30px] flex justify-between text-[3px] leading-[6px] text-black">
        <span className="border-t border-black/60">{edge}</span>
        <span className="border-t border-black/60">{edge}</span>
      </div>
    </div>
  );
}

function GridNote({ place, lines, note }) {
  return (
    <div className={"absolute top-[423px] text-[7px] leading-[10px] font-semibold whitespace-nowrap " + place}>
      <p className="mb-0.5">{lines[0]}</p>
      <p>{lines[1]}</p>
      <p>{lines[2]}</p>
      <p>{lines[3]}</p>
      {note && <p className="mt-2 text-[7px] leading-[7px]">{note}</p>}
    </div>
  );
}

function GridFrame() {
  return (
    <Frame title="Grid" place="left-8 top-[687px]" body="h-[541px] w-[1364px] bg-[#eceeed]">
      <h3 className="absolute top-[22px] left-[15px] text-[70px] leading-[84px] font-bold whitespace-nowrap">Screen Sizes and Layout Grids</h3>
      <div className="absolute top-[31px] left-[1082px] w-[120px] text-center text-[10px] leading-4 font-light whitespace-nowrap">
        <p>xs, extra-small: 320px</p>
        <p>sm, small: 600px</p>
        <p>md, medium: 960px</p>
        <p>lg, large: 1024px</p>
        <p>xl, extra-large: 1280</p>
      </div>
      <GridSample place="left-[18px] w-[198px] h-[140px]" count={6} edge="24px" inset="px-1.5" />
      <GridSample place="left-[239px] w-[76px] h-[235px]" count={3} edge="16px" inset="px-1" />
      <GridSample place="left-[335px] w-[158px] h-[235px]" count={6} edge="24px" inset="px-1.5" />
      <GridSample place="left-[517px] w-[225px] h-[235px]" count={9} edge="24px" inset="px-1.5" />
      <GridSample place="left-[764px] w-[241px] h-[235px]" count={12} edge="40px" inset="px-2.5" />
      <GridSample place="left-[1027px] w-[300px] h-[235px]" count={15} edge="40px" inset="px-2.5" />
      <GridNote place="left-24" lines={["842px", "6 columns", "24px margin", "16px gutter"]} />
      <GridNote place="left-[258px]" lines={["320px", "3 columns", "16px margin", "16px gutter"]} />
      <GridNote place="left-[387px]" lines={["600px", "6 columns", "24px margin", "16px gutter"]} />
      <GridNote place="left-[594px]" lines={["960px", "9 columns", "24px margin", "16px gutter"]} />
      <GridNote place="left-[841px]" lines={["1024px", "12 columns", "40px margin", "16px gutter"]} />
      <GridNote
        place="left-[1155px]"
        lines={["1280px", "15 columns", "40px margin", "16px gutter"]}
        note={<>Rare case scenario: (screen sizes larger than<br />this, center the content..adjust margins)</>}
      />
    </Frame>
  );
}

/* ---------- header / nav ---------- */

function SearchBox({ text, lead, dark }) {
  return (
    <label className={"flex h-2.5 min-w-0 flex-1 items-center rounded-xs border px-[3px] " + (dark ? "border-[#888]" : "border-[#e3e3e3]")}>
      {lead && <Search className="mr-1 size-1 shrink-0" strokeWidth={3} />}
      <input aria-label="Search" placeholder={text} className={"w-full min-w-0 bg-transparent text-[4px] leading-[6px] " + (dark ? "placeholder:text-[#ddd]" : "placeholder:text-[#aaa]")} />
      {!lead && <Search className="size-1 shrink-0" strokeWidth={3} />}
    </label>
  );
}

const teal = "flex h-2.5 shrink-0 items-center justify-center rounded-xs bg-[#78dcd5]";

function SmallBar({ place, search, active, bell, dark }) {
  return (
    <div className={"flex h-4 items-center gap-[3px] px-[5px] " + (dark ? "bg-[#343434] text-white " : "bg-white ") + place}>
      <Menu className="size-1 shrink-0" strokeWidth={3} />
      <SoloMark className="size-2 shrink-0" light={dark} />
      <button aria-label="Add customer" className={(dark ? "flex h-2.5 shrink-0 items-center justify-center rounded-xs border border-[#888]" : teal) + " w-[13px]"}><UserPlus className="size-1" strokeWidth={4} /></button>
      {search ? <SearchBox text="Search" dark={dark} /> : (
        <button aria-label="Search" className={"flex h-2.5 w-[13px] items-center justify-center rounded-xs " + (active ? "bg-[#579b96] text-white" : "bg-[#78dcd5]")}><Search className="size-1" strokeWidth={3} /></button>
      )}
      {bell && <Bell className="mx-0.5 size-1 shrink-0" strokeWidth={3} />}
      <Avatar />
      <ChevronDown className="size-[3px] shrink-0" strokeWidth={3} />
    </div>
  );
}

function WideBar({ lead, status, name }) {
  const red = status === "red" || status === "Set as Unavailable";
  const line = red ? " border-[#dc8a84] text-[#c2453b]" : " border-[#999]";
  return (
    <div className="flex h-[17px] items-center gap-1 bg-white px-[5px] text-[4px] leading-[6px] whitespace-nowrap">
      <Menu className="size-1 shrink-0" strokeWidth={3} />
      <span className="ml-1 flex items-center gap-0.5">
        <SoloMark className="size-2.5" />
        <b className="text-[8px] leading-[10px]">solo</b>
      </span>
      <button className={teal + " w-[33px]"}>New Customer</button>
      <SearchBox text="Search Customer ID, Name, or Proposal ID" lead={lead} />
      {status && (
        name ? (
          <button className={"flex h-2.5 shrink-0 items-center rounded-xs border px-[3px] text-[3px]" + line}>{status}</button>
        ) : (
          <button aria-label="Set availability" className={"flex h-2.5 w-[13px] shrink-0 items-center justify-center rounded-xs border" + line}><Power className="size-[5px]" strokeWidth={3} /></button>
        )
      )}
      <Bell className="mx-0.5 size-1 shrink-0" strokeWidth={3} />
      <Avatar />
      {name && <span className="-ml-0.5 text-[3px]">Mary Janet Willwood</span>}
      <ChevronDown className="size-[3px] shrink-0" strokeWidth={3} />
    </div>
  );
}

function ComponentList({ place, items }) {
  return (
    <div className={"absolute text-[5px] leading-[5px] whitespace-nowrap " + place}>
      <p className="mb-1">Component list:</p>
      <ol className="list-inside list-decimal pl-0.5 leading-[5px]">
        {items.map((t) => (
          <li key={t}>{t}</li>
        ))}
      </ol>
    </div>
  );
}

function HeaderFrame() {
  const h = "absolute top-[117px] text-[18px] leading-[22px] font-bold whitespace-nowrap ";
  return (
    <Frame title="Header / Nav" place="left-[1434px] top-[687px]" body="h-[580px] w-[1050px] bg-[#eceeed]">
      <h3 className="absolute top-[18px] left-[18px] text-[32px] leading-10 font-bold">Header / App Bar</h3>
      <h4 className={h + "left-[21px]"}>XSmall | 320 px</h4>
      <h4 className={h + "left-[210px]"}>Small | 468 px</h4>
      <h4 className={h + "left-[390px]"}>Medium | 960 px</h4>
      <h4 className={h + "left-[705px]"}>Large | 1280 px</h4>
      <div className="pointer-events-none absolute top-[161px] left-[18px] h-[108px] w-[993px] rounded-xs border border-dashed border-[#d6d3f5]" />
      <div className="absolute top-[167px] left-[22px] w-[75px]">
        <SmallBar place="" />
        <div className="mt-[28px] bg-white pb-1">
          <SmallBar place="" active />
          <div className="flex px-1"><SearchBox text="Search" /></div>
        </div>
        <p className="mt-1 text-[5px] leading-2">while using search</p>
      </div>
      <ComponentList place="top-[275px] left-[22px]" items={["hamburger menu", "SOLO logo", "customer create icon button", "Search icon button", "Profile"]} />
      <div className="absolute top-[167px] left-[211px] w-[141px]">
        <SmallBar place="w-[110px]" search bell />
        <h5 className="mt-[54px] text-[9px] leading-3 font-bold">600 px</h5>
        <SmallBar place="" search bell />
        <h4 className="mt-[26px] text-[18px] leading-[18px] font-bold whitespace-nowrap">Small Dark<br />mode| 468 px</h4>
        <SmallBar place="mt-[9px] w-[110px]" search dark />
      </div>
      <ComponentList place="top-[187px] left-[211px]" items={["hamburger menu", "SOLO logo", "customer create icon button", "Search bar", "Profile"]} />
      <div className="absolute top-[165px] left-[391px] w-[225px]">
        <WideBar status="black" />
        <div className="mt-[5px]"><WideBar status="red" /></div>
        <div className="mt-[29px]"><WideBar /></div>
        <p className="mt-px text-[5px] leading-2">header for : non solo reps</p>
      </div>
      <ComponentList place="top-[275px] left-[398px]" items={["hamburger menu", "SOLO logo", "customer create button", "Search bar", "'Set available' icon button", "Profile"]} />
      <div className="absolute top-[165px] left-[706px] w-[300px]">
        <WideBar lead status="Set as Available" name />
        <div className="mt-1"><WideBar lead status="Set as Unavailable" name /></div>
        <div className="mt-8"><WideBar name /></div>
        <p className="mt-0.5 text-[5px] leading-2">header for : non solo reps</p>
      </div>
      <ComponentList place="top-[275px] left-[706px]" items={["hamburger menu", "SOLO logo", "customer create button", "Search bar", "'Set available' button", "Profile"]} />
    </Frame>
  );
}

/* ---------- toolbar ---------- */

const tools = [
  ["Frame", <path d="M8 0v32M24 0v32M0 8h32M0 24h32" />],
  ["Rectangle", <rect x="1" y="1" width="30" height="30" rx="3" />],
  ["Pen", <g strokeLinejoin="round"><path d="M2 -1C0 -1 -1 0 -1 2L3 18c1.500 7 5 11 13 11.500l4 .5c1 .5 1.500 1.500 2.500 2.500L33 21.500c-.8-1-2-1.500-2.500-2.500l-.5-4c-.5-7-3-10.500-11-12z" /><circle cx="16" cy="15.500" r="5" /><path d="M0 0l12 12" /></g>],
  ["Text", <path d="M1 8V2h30v6M16 2v29M10 31h12" />],
];

function ToolSvg({ children }) {
  return (
    <svg viewBox="-2 -2 36 36" className="size-9" fill="none" stroke="#1a1a1a" strokeWidth="2" strokeLinecap="round" aria-hidden="true">
      {children}
    </svg>
  );
}

function MoreButton({ label }) {
  return (
    <button aria-label={label + " options"} className="mr-3.5 flex h-16 w-9 items-center justify-center">
      <svg viewBox="0 0 12 12" className="size-3" fill="none" stroke="#1a1a1a" strokeWidth="2">
        <path d="M1.500 4L6 8.500 10.500 4" />
      </svg>
    </button>
  );
}

function Toolbar() {
  const btn = "flex size-16 items-center justify-center rounded-[10px]";
  return (
    <div className="absolute bottom-[10px] left-1/2 flex h-24 -translate-x-1/2 rounded-[26px] bg-white shadow-[0_0_1px_rgba(0,0,0,0.35),0_3px_10px_rgba(0,0,0,0.22)]">
      <div className="flex items-center border-r-2 border-[#e6e6e6] px-4">
        <button aria-label="Move" className={btn + " bg-[#4799f7]"}>
          <svg viewBox="-2 -2 36 36" className="size-9" fill="none" stroke="#fff" strokeWidth="2.200" strokeLinejoin="round">
            <path d="M1.500 0.800L31 11.500c2 .8 2 3.200.2 4.200L20 19.500l-5 12c-.8 2-3 2-3.800.1L-.2 2.800C-.7 1.400.200.400 1.500.800z" />
          </svg>
        </button>
        <MoreButton label="Move" />
        {tools.map(([name, drawing]) => (
          <React.Fragment key={name}>
            <button aria-label={name} className={btn}><ToolSvg>{drawing}</ToolSvg></button>
            <MoreButton label={name} />
          </React.Fragment>
        ))}
        <button aria-label="Comment" className={btn}>
          <ToolSvg><path d="M0 16C0 7 7-1 16.500-1S33 7 33 16s-7 15.500-16.500 15.500H3C1 31.500 0 30.500 0 28.500z" strokeLinejoin="round" /></ToolSvg>
        </button>
        <button aria-label="Actions" className={"ml-4 " + btn}>
          <ToolSvg>
            <path d="M7.500 0l7 7.500-7 7.500-7-7.500z" strokeLinejoin="round" />
            <circle cx="25" cy="7.500" r="6.700" />
            <rect x="1" y="18" width="13" height="13" rx="3" />
            <path d="M25 18v13M18.500 24.500h13" />
          </ToolSvg>
        </button>
      </div>
      <div className="flex items-center px-4">
        <div className="flex h-16 items-center rounded-[10px] bg-[#f5f5f5] px-1">
          <button aria-label="Draw" className="flex h-14 w-[60px] items-center justify-center">
            <svg viewBox="0 0 28 28" className="size-7" fill="none" stroke="#808080" strokeWidth="2.200" strokeLinecap="round" strokeLinejoin="round">
              <path d="M2 14.500C7 10 14 2 18.500 2c5 .5-12.500 13.500-9.500 16.500C12 21 19.500 9.500 24 12c4 2.500-10 9-7 12 2 1.500 6-4.500 8.500-3 1.500 1-2 3.500-1.500 6" />
            </svg>
          </button>
          <button aria-label="Design" className="flex size-14 items-center justify-center rounded-[8px] bg-white shadow-[0_0_2px_rgba(0,0,0,0.25),0_1px_4px_rgba(0,0,0,0.15)]">
            <svg viewBox="0 0 28 28" className="size-7" fill="none" stroke="#1a66e0" strokeWidth="2.200" strokeLinejoin="round">
              <path d="M3 2h20.500a1.500 1.500 0 0 1 1.500 1.500V8H8.500v17.500H3A1.500 1.500 0 0 1 1.500 24V3.500A1.500 1.500 0 0 1 3 2zM8.500 8H2M8.500 8V2M14 3v3M19 3v3M3 14h3M3 19h3" />
              <path d="M14 13.500l12 4.500-5 3-2.500 5.500z" />
            </svg>
          </button>
          <button aria-label="Dev mode" className="flex h-14 w-[60px] items-center justify-center">
            <svg viewBox="0 0 28 28" className="size-7" fill="none" stroke="#808080" strokeWidth="2" strokeLinecap="round">
              <path d="M6.500 7L.8 14l5.700 7M21.500 7l5.700 7-5.700 7M17 1.500L11 26.500" />
            </svg>
          </button>
        </div>
      </div>
    </div>
  );
}

/* ---------- page ---------- */

export default function App() {
  return (
    <div className="flex h-screen overflow-hidden bg-[#e5e5e5] font-['Inter',sans-serif] text-black">
      <Sidebar />
      <main className="relative min-w-0 flex-1 overflow-hidden">
        <ColorsFrame />
        <Frame title="24 px Icons" place="left-[1569px] top-[2px]" body="h-[86px] w-[232px] bg-white">
          <IconSheet grid="grid w-[184px] grid-cols-16 gap-y-1.5 pt-[7px] pl-[8px]" size="size-[5px]" />
        </Frame>
        <Frame title="To..." place="left-[1811px] top-[2px]" body="h-[116px] w-[59px] bg-white">
          <TogglesDrawing />
        </Frame>
        <Frame title="16 px Icons" place="left-[1569px] top-[105px]" body="h-[76px] w-[197px] bg-white">
          <IconSheet grid="grid w-[157px] grid-cols-16 gap-y-[5px] pt-[7px] pl-1.5" size="size-1" />
        </Frame>
        <Frame title="Assets | Proposal Page" place="left-[1928px] top-[2px]" body="h-[66px] w-[272px] bg-white">
          <AssetsDrawing />
        </Frame>
        <Frame title="Proposal Icons" place="left-[1928px] top-[85px]" body="h-[86px] w-[189px] bg-white">
          <ProposalIcons />
        </Frame>
        <Frame title="Shadows" place="left-[2222px] top-[3px]" body="h-[86px] w-[230px] bg-white">
          <ShadowsContent />
        </Frame>
        <Frame title="Type - Gilroy / Not..." place="left-[1530px] top-[263px]" body="h-[321px] w-[225px] bg-white">
          <TypeContent />
        </Frame>
        <Frame title="Buttons" place="left-[1811px] top-[263px]" body="h-[340px] w-[320px] bg-white">
          <ButtonsContent />
        </Frame>
        <GridFrame />
        <HeaderFrame />
        <Toolbar />
        <div className="absolute right-1 bottom-0 left-[448px] h-0.5 rounded-t bg-[#8f918f]" />
      </main>
    </div>
  );
}
